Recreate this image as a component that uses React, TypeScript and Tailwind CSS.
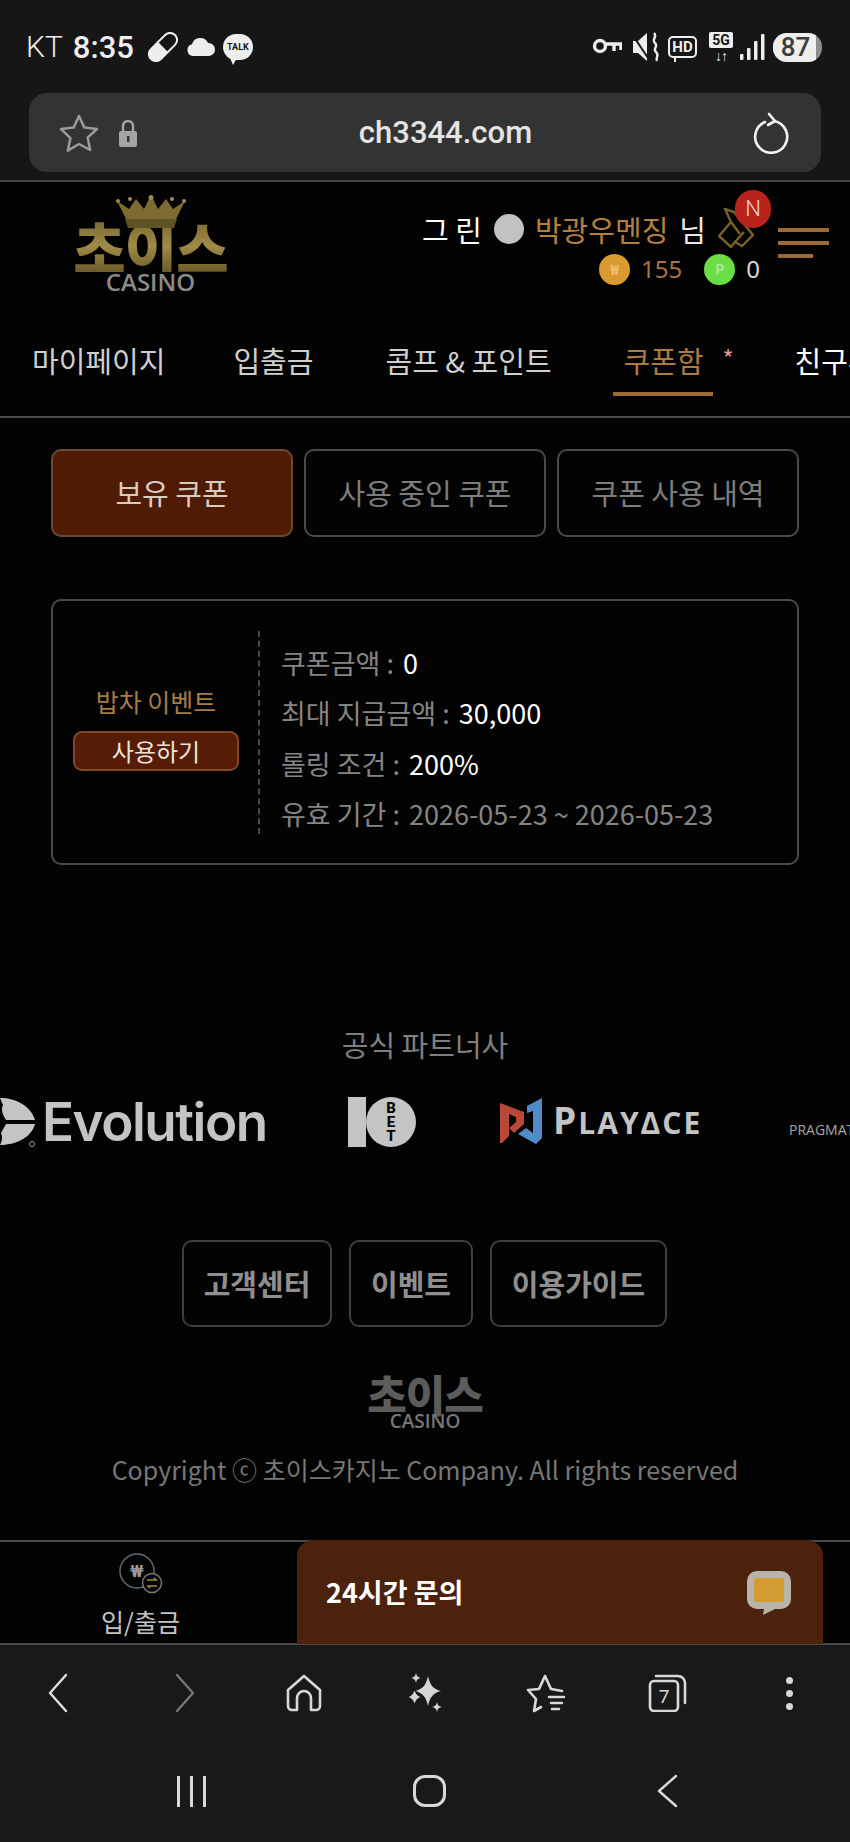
const FONT = "font-['Noto_Sans_CJK_KR','Noto_Sans',sans-serif]";

const TABS = [
  { label: '보유 쿠폰', active: true },
  { label: '사용 중인 쿠폰', active: false },
  { label: '쿠폰 사용 내역', active: false },
];

const NAV = ['마이페이지', '입출금', '콤프 & 포인트'];

function StatusBar() {
  return (
    <div className="flex h-[93px] items-center justify-between pt-[1px] pl-[26px] pr-[28px] font-['Roboto',sans-serif] text-[#eeeeee]">
      <div className="flex items-center">
        <span className="text-[30px] font-light leading-none">KT</span>
        <span className="ml-[10px] text-[31px] font-medium leading-none">8:35</span>
        {/* pill */}
        <svg className="ml-[14px]" width="30" height="30" viewBox="0 0 30 30">
          <g transform="rotate(45 15 15)">
            <rect x="8" y="-2" width="14" height="34" rx="7" fill="none" stroke="#eee" strokeWidth="2" />
            <path d="M8 15h14v10a7 7 0 0 1-14 0z" fill="#eee" />
          </g>
        </svg>
        {/* cloud */}
        <svg className="ml-[8px]" width="30" height="22" viewBox="0 0 30 22">
          <path d="M7 20a6 6 0 0 1-1-11.8A8.5 8.5 0 0 1 22 7a6.5 6.5 0 0 1 1 13z" fill="#eee" />
        </svg>
        {/* talk */}
        <div className="relative ml-[7px] flex h-[26px] w-[30px] items-center justify-center rounded-full bg-[#eeeeee]">
          <span className="text-[9px] font-bold leading-none text-[#161616]">TALK</span>
          <div className="absolute bottom-[-5px] left-[7px] h-0 w-0 border-l-[3px] border-r-[4px] border-t-[7px] border-l-transparent border-r-transparent border-t-[#eeeeee]" />
        </div>
      </div>
      <div className="flex items-center">
        <svg width="30" height="18" viewBox="0 0 30 18" fill="none" stroke="#eee" strokeWidth="3.4">
          <circle cx="8" cy="8" r="5.5" />
          <path d="M14 6h15v6M22 6v7" />
        </svg>
        <svg className="ml-[9px]" width="29" height="30" viewBox="0 0 29 30">
          <path d="M2 9h5l9-8v28l-9-8H2z" fill="#eee" />
          <path d="M23 1c4 4-3 6 1 10s-3 5 1 9-1 5 1 9" fill="none" stroke="#eee" strokeWidth="2.4" />
          <path d="M1 2l16 24" stroke="#161616" strokeWidth="2" />
        </svg>
        <div className="relative ml-[8px] flex h-[22px] w-[29px] items-center justify-center rounded-[5px] border-2 border-[#eeeeee]">
          <span className="text-[15px] font-bold leading-none">HD</span>
          <div className="absolute bottom-[-6px] left-[4px] h-[6px] w-[2px] bg-[#eeeeee]" />
        </div>
        <div className="ml-[12px] flex w-[24px] flex-col items-center">
          <div className="flex h-[16px] w-[24px] items-center justify-center rounded-[2px] bg-[#eeeeee] text-[14px] font-bold leading-none text-[#161616]">5G</div>
          <div className="mt-[1px] text-[14px] font-bold leading-none tracking-[-1px]">↓↑</div>
        </div>
        <svg className="ml-[7px]" width="25" height="26" viewBox="0 0 25 26" fill="#eee">
          <rect x="0" y="20" width="3.5" height="6" rx="1" />
          <rect x="7" y="14" width="3.5" height="12" rx="1" />
          <rect x="14" y="7" width="3.5" height="19" rx="1" />
          <rect x="21" y="0" width="3.5" height="26" rx="1" />
        </svg>
        <div className="ml-[8px] flex h-[29px] w-[49px] overflow-hidden rounded-[14px] bg-[#8d8d8d]">
          <div className="flex h-full w-[43px] items-center justify-center bg-[#eeeeee] pl-[2px] text-[26px] font-medium leading-none text-[#3c3c3c]">87</div>
        </div>
      </div>
    </div>
  );
}

function UrlBar() {
  return (
    <div className="mx-[29px] flex h-[79px] items-center justify-between rounded-[18px] bg-[#333333] pl-[30px] pr-[32px]">
      <div className="flex items-center">
        <svg width="40" height="40" viewBox="0 0 40 40" fill="none" stroke="#9a9a9a" strokeWidth="2.5" strokeLinejoin="round">
          <path d="M20 3l5.4 11.6 12.6 1.4-9.4 8.6 2.6 12.4L20 31l-11.2 6.6 2.6-12.4L2 16l12.600-1.400z" />
        </svg>
        <svg className="ml-[19px]" width="20" height="32" viewBox="0 0 20 32">
          <path d="M5 15V9a5 5 0 0 1 10 0v6" fill="none" stroke="#a5a5a5" strokeWidth="2.5" />
          <rect x="1" y="14" width="18" height="16" rx="2" fill="#a5a5a5" />
          <rect x="9" y="19" width="2.5" height="6" fill="#333" />
        </svg>
      </div>
      <span className="font-['Roboto',sans-serif] text-[31px] font-medium leading-none text-[#e4e4e4]">ch3344.com</span>
      <svg width="36" height="42" viewBox="0 0 36 42" fill="none" stroke="#f2f2f2" strokeWidth="2.6" strokeLinecap="round" strokeLinejoin="round">
        <path d="M21 9a16 16 0 1 1-9 1" />
        <path d="M16 2l6 7-7 4" />
      </svg>
    </div>
  );
}

function GoldLogo() {
  return (
    <div className="ml-[75px] flex w-[151px] flex-col items-center">
      <svg className="relative z-10 mt-[13px]" width="70" height="33" viewBox="0 0 70 33">
        <path d="M10 24L1 6l12 8L20 4l8 10L35 0l7 14 8-10 7 10 12-8-9 18z" fill="#7d6c30" />
        <path d="M9 24h52l-3 9H12z" fill="#5f5224" />
        <circle cx="35" cy="2.500" r="2.500" fill="#a08d4a" />
        <circle cx="14" cy="4" r="2" fill="#a08d4a" />
        <circle cx="56" cy="4" r="2" fill="#a08d4a" />
        <circle cx="2" cy="6" r="2" fill="#a08d4a" />
        <circle cx="68" cy="6" r="2" fill="#a08d4a" />
      </svg>
      <span className="mt-[-8px] h-[50px] origin-top scale-y-[1.04] whitespace-nowrap bg-gradient-to-b from-[#7a6a30] via-[#a08b47] to-[#6d5d2a] bg-clip-text text-[57px] font-black leading-[50px] tracking-[-1px] text-transparent">
        초이스
      </span>
      <span className="mt-[2px] font-['Open_Sans',sans-serif] text-[24px] font-semibold leading-[20px] text-[#8b8b8b]">CASINO</span>
    </div>
  );
}

function Header() {
  return (
    <div className="relative flex h-[118px] justify-between">
      <GoldLogo />
      <div className="mr-[90px] mt-[29px] flex flex-col items-end">
        <div className="mr-[54px] flex h-[36px] items-center text-[29px] leading-none">
          <span className="text-white">그 린</span>
          <span className="ml-[12px] h-[30px] w-[30px] rounded-full bg-[#c2c2c2]" />
          <span className="ml-[11px] text-[#b5803f]">박광우멘징</span>
          <span className="ml-[11px] text-[#e8e8e8]">님</span>
        </div>
        <div className="mt-[6px] flex h-[32px] items-center text-[24px] leading-none">
          <span className="flex h-[31px] w-[31px] items-center justify-center rounded-full bg-[#d99a30] text-[14px] font-bold text-[#eec27a]">₩</span>
          <span className="ml-[11px] font-['Noto_Sans',sans-serif] text-[#a8743a]">155</span>
          <span className="ml-[22px] flex h-[31px] w-[31px] items-center justify-center rounded-full bg-[#6bdd45] text-[14px] font-bold text-[#a8e896]">P</span>
          <span className="ml-[11px] font-['Noto_Sans',sans-serif] text-[#d8d8d8]">0</span>
        </div>
      </div>
      {/* gem + badge */}
      <svg className="absolute left-[718px] top-[26px]" width="36" height="40" viewBox="0 0 36 40" fill="none" stroke="#7a6128" strokeWidth="2.4">
        <path d="M1 28L13 14 7 1l9 3 19 23-11 11-7-4-4 5z" />
        <path d="M13 14l9 12M17 34l9-10" />
      </svg>
      <span className="absolute left-[735px] top-[8px] flex h-[38px] w-[36px] items-center justify-center rounded-full bg-[#b8231c] font-['Roboto',sans-serif] text-[22px] font-light leading-none text-[#f5d5d0]">N</span>
      <div className="absolute left-[778px] top-[46px] flex w-[51px] flex-col gap-[9px]">
        <span className="h-[4px] w-full bg-[#9c6a38]" />
        <span className="h-[4px] w-full bg-[#9c6a38]" />
        <span className="h-[4px] w-[35px] bg-[#9c6a38]" />
      </div>
    </div>
  );
}

function NavTabs() {
  return (
    <div className="flex h-[118px] items-start gap-[50px] overflow-hidden border-b-2 border-[#4a4a4a] pl-[21px] pt-[39px] text-[29px] leading-[42px] whitespace-nowrap">
      {NAV.map((label) => (
        <div key={label} className="px-[11px] text-[#cfcfcf] first:pr-[7px]">{label}</div>
      ))}
      <div className="relative mr-[21px] h-[57px] w-[100px] shrink-0 border-b-4 border-[#9c6a38] pl-[11px] text-[#ad7a42]">
        쿠폰함
        <span className="absolute left-[110px] top-[-2px] text-[24px] text-[#e89a9a]">*</span>
      </div>
      <div className="px-[11px] text-white">친구추천</div>
    </div>
  );
}

function CouponTabs() {
  return (
    <div className="mx-[51px] mt-[31px] grid grid-cols-3 gap-[11px]">
      {TABS.map((tab) => (
        <div
          key={tab.label}
          className={`flex h-[88px] items-center justify-center rounded-[10px] border-2 text-[29px] ${
            tab.active ? 'border-[#6e4a33] bg-[#4f1b05] text-[#d8cbbf]' : 'border-[#4a4a4a] text-[#7d7d7d]'
          }`}
        >
          {tab.label}
        </div>
      ))}
    </div>
  );
}

function CouponCard() {
  return (
    <div className="mx-[51px] mt-[62px] flex h-[266px] items-center rounded-[10px] border-2 border-[#4a4a4a] pl-[20px]">
      <div className="mb-[12px] flex w-[166px] flex-col items-center">
        <span className="text-[25px] leading-[40px] text-[#a67c45]">밥차 이벤트</span>
        <button className="mt-[10px] flex h-[40px] w-[166px] items-center justify-center rounded-[9px] border-2 border-[#80492a] bg-[#561c06] text-[24px] leading-none text-[#ece4dc]">
          사용하기
        </button>
      </div>
      <div className="ml-[19px] flex h-[203px] flex-col justify-between border-l-2 border-dashed border-[#4a4a4a] pl-[21px] pt-[13px] text-[27px] leading-[38px] text-[#858585]">
        <div>쿠폰금액 : <span className="ml-[3px] text-white">0</span></div>
        <div>최대 지급금액 : <span className="ml-[3px] text-white">30,000</span></div>
        <div>롤링 조건 : <span className="ml-[3px] text-white">200%</span></div>
        <div>유효 기간 : <span className="ml-[3px]">2026-05-23 ~ 2026-05-23</span></div>
      </div>
    </div>
  );
}

function Partners() {
  return (
    <div className="mt-[157px]">
      <div className="text-center text-[29px] leading-[44px] text-[#7f7f7f]">공식 파트너사</div>
      <div className="mt-[30px] flex h-[52px] items-center overflow-hidden whitespace-nowrap">
        {/* evolution */}
        <svg className="shrink-0" width="38" height="50" viewBox="0 0 38 50">
          <path d="M0 1c16 0 31 8 35 22H6C2 17 1 12 3 8z" fill="#c4c4c4" />
          <path d="M6 27h29c-3 12-17 21-35 21 2-4 3-8 1-12z" fill="#c4c4c4" />
          <circle cx="32" cy="47" r="2.500" fill="none" stroke="#999" strokeWidth="1" />
        </svg>
        <span className="ml-[4px] w-[224px] shrink-0 font-['Inter',sans-serif] text-[53px] font-semibold leading-none tracking-[-1.5px] text-[#c4c4c4]">Evolution</span>
        {/* 10bet */}
        <svg className="ml-[82px] shrink-0" width="68" height="50" viewBox="0 0 68 50">
          <rect x="0" y="0" width="18" height="50" fill="#c4c4c4" />
          <circle cx="43" cy="25" r="25" fill="#c4c4c4" />
          <text x="43" y="16" textAnchor="middle" fontSize="15" fontWeight="800" fontFamily="Roboto" fill="#050505">B</text>
          <text x="43" y="30" textAnchor="middle" fontSize="15" fontWeight="800" fontFamily="Roboto" fill="#050505">E</text>
          <text x="43" y="44" textAnchor="middle" fontSize="15" fontWeight="800" fontFamily="Roboto" fill="#050505">T</text>
        </svg>
        {/* playace */}
        <svg className="ml-[84px] mb-[2px] shrink-0" width="42" height="46" viewBox="0 0 42 46">
          <path d="M0 5l24 9v12l-10 9-5-5 7-6v-5l-7-3v22l-7 7H0z" fill="#b9473a" />
          <path d="M42 0v40l-6 6-18-10 8-6 7 5V13l-6 2V8z" fill="#4f8cc9" />
        </svg>
        <span className="mb-[5px] ml-[11px] w-[155px] shrink-0 font-['Open_Sans',sans-serif] text-[30px] font-bold leading-none tracking-[2px] text-[#c4c4c4]">
          <span className="text-[37px]">P</span>LAYΔCE
        </span>
        <span className="ml-[81px] mt-[15px] shrink-0 font-['Open_Sans',sans-serif] text-[14px] text-[#a5a5a5]">PRAGMATIC PLAY</span>
      </div>
    </div>
  );
}

function FooterLinks() {
  return (
    <div className="ml-[182px] mt-[92px] flex gap-[17px] text-[29px] font-bold leading-none text-[#8f8f8f]">
      <div className="flex h-[87px] w-[150px] items-center justify-center rounded-[10px] border-2 border-[#3f3f3f]">고객센터</div>
      <div className="flex h-[87px] w-[124px] items-center justify-center rounded-[10px] border-2 border-[#3f3f3f]">이벤트</div>
      <div className="flex h-[87px] w-[177px] items-center justify-center rounded-[10px] border-2 border-[#3f3f3f]">이용가이드</div>
    </div>
  );
}

function FooterBrand() {
  return (
    <div className="flex flex-col items-center">
      <div className="mt-[46px] flex h-[56px] flex-col items-center">
        <span className="text-[43px] font-black leading-[40px] tracking-[-1px] text-[#5c5c5c]">초이스</span>
        <span className="font-['Open_Sans',sans-serif] text-[19px] font-semibold leading-[16px] text-[#777777]">CASINO</span>
      </div>
      <div className="mt-[22px] text-[25px] leading-[36px] text-[#777777]">
        Copyright ⓒ 초이스카지노 Company. All rights reserved
      </div>
    </div>
  );
}

function ActionBar() {
  return (
    <div className="mt-[53px] flex h-[105px] border-y-2 border-[#4a4a4a]">
      <div className="flex w-[297px] flex-col items-center pr-[16px]">
        <svg className="mt-[11px]" width="44" height="42" viewBox="0 0 44 42" fill="none">
          <circle cx="18" cy="18" r="17" stroke="#5d6a75" strokeWidth="1.5" />
          <text x="18" y="24" textAnchor="middle" fontSize="17" fontWeight="700" fontFamily="Roboto" fill="#9a9a9a">₩</text>
          <circle cx="33" cy="30" r="9.5" fill="#050505" stroke="#777" strokeWidth="1.5" />
          <path d="M28 27h9l-2-2M38 33h-9l2 2" stroke="#a08a40" strokeWidth="1.5" />
        </svg>
        <span className="mt-[10px] text-[25px] leading-[32px] text-[#c4c4c4]">입/출금</span>
      </div>
      <div className="mt-[-2px] flex h-[104px] w-[526px] items-start justify-between rounded-t-[16px] bg-[#4c220d] pl-[29px] pr-[32px]">
        <span className="mt-[31px] text-[27px] font-bold leading-[42px] text-white">24시간 문의</span>
        <svg className="mt-[31px]" width="44" height="44" viewBox="0 0 44 44">
          <path d="M10 0h24a10 10 0 0 1 10 10v18a10 10 0 0 1-10 10h-6l-12 6 1-6h-7a10 10 0 0 1-10-10V10A10 10 0 0 1 10 0z" fill="#b8b4ac" />
          <rect x="7" y="7" width="30" height="24" rx="3" fill="#d39c33" />
        </svg>
      </div>
    </div>
  );
}

function BrowserBar() {
  return (
    <div className="grid h-[96px] grid-cols-7 items-center">
      <div className="flex justify-center pr-[5px]">
        <svg width="22" height="40" viewBox="0 0 22 40" fill="none" stroke="#e0e0e0" strokeWidth="2.4" strokeLinecap="round" strokeLinejoin="round"><path d="M19 2L3 20l16 18" /></svg>
      </div>
      <div className="flex justify-center pl-[5px]">
        <svg width="22" height="40" viewBox="0 0 22 40" fill="none" stroke="#777" strokeWidth="2.4" strokeLinecap="round" strokeLinejoin="round"><path d="M3 2l16 18L3 38" /></svg>
      </div>
      <div className="flex justify-center">
        <svg width="36" height="38" viewBox="0 0 36 38" fill="none" stroke="#d8d8d8" strokeWidth="2.6" strokeLinejoin="round">
          <path d="M2 16L18 2l16 14v16a4 4 0 0 1-4 4h-5V24a7 7 0 0 0-14 0v12H6a4 4 0 0 1-4-4z" />
        </svg>
      </div>
      <div className="flex justify-center">
        <svg width="36" height="40" viewBox="0 0 36 40" fill="#d5d5d5">
          <path d="M21 3c2 9 5 13 13 15-8 2-11 6-13 15-2-9-5-13-13-15 8-2 11-6 13-15z" />
          <path d="M7.500 14c1 6 2.500 8 7.500 10-5 2-6.500 4-7.500 10-1-6-2.500-8-7.500-10 5-2 6.500-4 7.500-10z" stroke="#19191b" strokeWidth="1.5" />
          <path d="M9 0c.7 3 1.500 4 4.500 5-3 1-3.800 2-4.500 5-.7-3-1.500-4-4.500-5 3-1 3.800-2 4.500-5z" />
          <path d="M30 29c.7 3 1.500 4 4.500 5-3 1-3.800 2-4.500 5-.7-3-1.500-4-4.500-5 3-1 3.800-2 4.500-5z" />
        </svg>
      </div>
      <div className="flex justify-center">
        <svg width="40" height="40" viewBox="0 0 40 40" fill="none" stroke="#d8d8d8" strokeWidth="2.6" strokeLinecap="round" strokeLinejoin="round">
          <path d="M15 34l-7 4 2-12-8-9 11-1 6-13 6 13 11 2" />
          <path d="M23 24h15M25 30h11M26 36h7" />
        </svg>
      </div>
      <div className="flex justify-center">
        <svg width="40" height="38" viewBox="0 0 40 38" fill="none" stroke="#d8d8d8" strokeWidth="2.6" strokeLinecap="round">
          <rect x="2" y="7" width="28" height="30" rx="4" />
          <path d="M8 2h22a7 7 0 0 1 7 7v20" />
          <text x="16" y="29" textAnchor="middle" fontSize="19" fontFamily="Roboto" fill="#d8d8d8" stroke="none">7</text>
        </svg>
      </div>
      <div className="flex flex-col items-center gap-[6px]">
        <span className="h-[7px] w-[7px] rounded-full bg-[#d8d8d8]" />
        <span className="h-[7px] w-[7px] rounded-full bg-[#d8d8d8]" />
        <span className="h-[7px] w-[7px] rounded-full bg-[#d8d8d8]" />
      </div>
    </div>
  );
}

function SystemBar() {
  return (
    <div className="flex h-[101px] pb-[1px] pl-[72px]">
      <div className="flex w-[238px] items-center justify-center gap-[10px]">
        <span className="h-[31px] w-[3px] bg-[#d8d8d8]" />
        <span className="h-[31px] w-[3px] bg-[#d8d8d8]" />
        <span className="h-[31px] w-[3px] bg-[#d8d8d8]" />
      </div>
      <div className="flex w-[238px] items-center justify-center">
        <span className="h-[32px] w-[33px] rounded-[12px] border-[3px] border-[#d8d8d8]" />
      </div>
      <div className="flex w-[238px] items-center justify-center">
        <svg width="22" height="34" viewBox="0 0 22 34" fill="none" stroke="#d8d8d8" strokeWidth="2.4" strokeLinecap="round" strokeLinejoin="round"><path d="M20 2L3 17l17 15" /></svg>
      </div>
    </div>
  );
}

export default function App() {
  return (
    <div className={`h-[1842px] w-[850px] overflow-hidden bg-[#030303] ${FONT}`}>
      <div className="h-[182px] border-b-2 border-[#444444] bg-[#161616]">
        <StatusBar />
        <UrlBar />
      </div>
      <Header />
      <NavTabs />
      <CouponTabs />
      <CouponCard />
      <Partners />
      <FooterLinks />
      <FooterBrand />
      <ActionBar />
      <div className="bg-[#19191b]">
        <BrowserBar />
        <SystemBar />
      </div>
    </div>
  );
}
